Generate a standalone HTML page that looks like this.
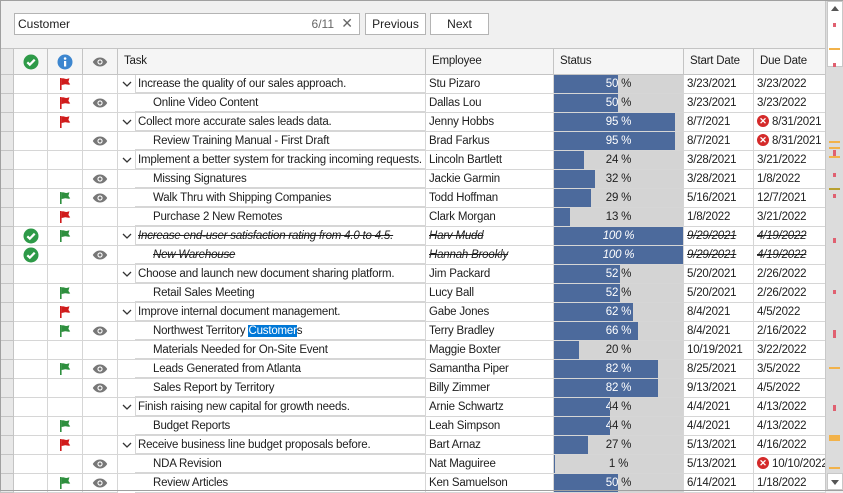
<!DOCTYPE html>
<html><head><meta charset="utf-8"><style>
*{box-sizing:border-box;margin:0;padding:0}
body{width:843px;height:491px;overflow:hidden;background:#f0f0f0;font-family:"Liberation Sans",sans-serif;font-size:12px;color:#202020;position:relative}
.frame{position:absolute;left:0;top:0;width:843px;height:491px;border:1px solid #a0a0a0;pointer-events:none;border-right:none}
.search{position:absolute;left:14px;top:13px;width:346px;height:22px;background:#fff;border:1px solid #b4b4b4;padding:3px 3px;}
.search .cnt{position:absolute;right:25px;top:3px;color:#666}
.search .x{position:absolute;right:6px;top:1px;color:#666;font-size:14px}
.btn{position:absolute;top:13px;height:22px;background:#fff;border:1px solid #b4b4b4;text-align:center;line-height:20px}
table{position:absolute;left:0;top:48px;border-collapse:collapse;table-layout:fixed;width:825px;background:#fff;font-size:11.5px;letter-spacing:-0.2px}
tr{height:19px}
td,th{height:18px;max-height:18px;border:1px solid #d6d6d6;white-space:nowrap;overflow:hidden;padding:0 0 0 3px;font-weight:normal;text-align:left;vertical-align:middle;line-height:17px}
th{height:25px;background:#f5f5f5;border-color:#c4c4c4;padding-left:6px}
tr:first-child{height:26px}
tr>*:first-child{background:#e8e8e8;border-color:#c4c4c4;padding:0}
td svg,th svg{display:inline-block;vertical-align:middle}
td.ic,th.ic{text-align:center;padding:0;line-height:0}
th.ic{line-height:0}
td.t{position:relative;border-bottom:none;padding:0}
td.t:after{content:"";position:absolute;left:17px;right:0;bottom:0;height:1px;background:#d6d6d6}
.p{margin-left:17px;border-left:1px solid #d6d6d6;padding-left:2px;height:18px;line-height:18px;overflow:hidden}
.c{padding-left:35px;height:18px;line-height:18px;overflow:hidden}
td.t svg.chev{position:absolute;left:4px;top:6px}
td.s{padding:0;position:relative}
.bg{position:absolute;left:0;top:0;right:0;bottom:0;background:#d4d4d4}
.bar{position:absolute;left:0;top:0;bottom:0;background:#4c6a9c;overflow:hidden}
.lt{position:absolute;left:0;top:0;width:129px;text-align:center;line-height:18px}
.bar .lt{color:#fff}
.st{text-decoration:line-through;font-style:italic}
.err{display:inline-block;width:12px;height:12px;border-radius:6px;background:#d42a2a;color:#fff;font-size:9px;line-height:12px;text-align:center;font-weight:bold;vertical-align:middle;margin-right:3px;letter-spacing:0}
.hl{background:#0078d7;color:#fff}
.sb{position:absolute;left:825px;top:0;width:18px;height:491px;background:#dcdcdc;border-left:1px solid #c8c8c8}
.sb div{position:absolute}
</style></head><body>
<svg width="0" height="0" style="position:absolute"><defs>
<symbol id="fl" viewBox="0 0 14 14"><path d="M2 1h1.6v12H2z"/><path d="M3.6 1.5c2-1 3.5 1 6 0.3l1.8-0.5-1 3.6 1.8 2.5c-2.5 1-4-1-6.6 0.2L3.6 8z"/></symbol>
<symbol id="ey" viewBox="0 0 16 10"><path d="M8 0.5C4.5 0.5 1.8 3 0.8 5c1 2 3.7 4.5 7.2 4.5S14.2 7 15.2 5C14.2 3 11.5 0.5 8 0.5z" fill="#777"/><circle cx="8" cy="5" r="2.6" fill="#fff"/><circle cx="8" cy="5" r="1.5" fill="#777"/></symbol>
<symbol id="ck" viewBox="0 0 16 16"><circle cx="8" cy="8" r="7.5" fill="#2e9a48"/><path d="M4.3 8.3l2.5 2.4 4.9-5" stroke="#fff" stroke-width="2.2" fill="none"/></symbol>
<symbol id="ch" viewBox="0 0 10 6"><path d="M1 1l4 4 4-4" stroke="#333" stroke-width="1.3" fill="none"/></symbol>
</defs></svg>
<div class="search">Customer<span class="cnt">6/11</span><span class="x">✕</span></div>
<div class="btn" style="left:365px;width:61px">Previous</div>
<div class="btn" style="left:430px;width:59px">Next</div>
<table>
<colgroup><col style="width:13px"><col style="width:34px"><col style="width:35px"><col style="width:35px"><col style="width:308px"><col style="width:128px"><col style="width:130px"><col style="width:70px"><col style="width:72px"></colgroup>
<tr><th></th><th class="ic"><svg width="16" height="16"><use href="#ck"/></svg></th><th class="ic"><svg width="16" height="16"><circle cx="8" cy="8" r="7.5" fill="#3d86cf"/><rect x="7" y="7" width="2.2" height="5.5" fill="#fff"/><circle cx="8.1" cy="4.5" r="1.3" fill="#fff"/></svg></th><th class="ic"><svg width="16" height="10"><use href="#ey"/></svg></th><th>Task</th><th>Employee</th><th>Status</th><th>Start Date</th><th>Due Date</th></tr>
<tr><td></td><td></td><td class="ic"><svg width="14" height="14" fill="#d01c1c"><use href="#fl"/></svg></td><td></td><td class="t"><svg class="chev" width="10" height="6"><use href="#ch"/></svg><div class="p">Increase the quality of our sales approach.</div></td><td>Stu Pizaro</td><td class="s"><div class="bg"><div class="lt">50 %</div></div><div class="bar" style="width:64px"><div class="lt">50 %</div></div></td><td>3/23/2021</td><td>3/23/2022</td></tr>
<tr><td></td><td></td><td class="ic"><svg width="14" height="14" fill="#d01c1c"><use href="#fl"/></svg></td><td class="ic"><svg width="16" height="10"><use href="#ey"/></svg></td><td class="t"><div class="c">Online Video Content</div></td><td>Dallas Lou</td><td class="s"><div class="bg"><div class="lt">50 %</div></div><div class="bar" style="width:64px"><div class="lt">50 %</div></div></td><td>3/23/2021</td><td>3/23/2022</td></tr>
<tr><td></td><td></td><td class="ic"><svg width="14" height="14" fill="#d01c1c"><use href="#fl"/></svg></td><td></td><td class="t"><svg class="chev" width="10" height="6"><use href="#ch"/></svg><div class="p">Collect more accurate sales leads data.</div></td><td>Jenny Hobbs</td><td class="s"><div class="bg"><div class="lt">95 %</div></div><div class="bar" style="width:121px"><div class="lt">95 %</div></div></td><td>8/7/2021</td><td><span class="err">✕</span>8/31/2021</td></tr>
<tr><td></td><td></td><td></td><td class="ic"><svg width="16" height="10"><use href="#ey"/></svg></td><td class="t"><div class="c">Review Training Manual - First Draft</div></td><td>Brad Farkus</td><td class="s"><div class="bg"><div class="lt">95 %</div></div><div class="bar" style="width:121px"><div class="lt">95 %</div></div></td><td>8/7/2021</td><td><span class="err">✕</span>8/31/2021</td></tr>
<tr><td></td><td></td><td></td><td></td><td class="t"><svg class="chev" width="10" height="6"><use href="#ch"/></svg><div class="p">Implement a better system for tracking incoming requests.</div></td><td>Lincoln Bartlett</td><td class="s"><div class="bg"><div class="lt">24 %</div></div><div class="bar" style="width:30px"><div class="lt">24 %</div></div></td><td>3/28/2021</td><td>3/21/2022</td></tr>
<tr><td></td><td></td><td></td><td class="ic"><svg width="16" height="10"><use href="#ey"/></svg></td><td class="t"><div class="c">Missing Signatures</div></td><td>Jackie Garmin</td><td class="s"><div class="bg"><div class="lt">32 %</div></div><div class="bar" style="width:41px"><div class="lt">32 %</div></div></td><td>3/28/2021</td><td>1/8/2022</td></tr>
<tr><td></td><td></td><td class="ic"><svg width="14" height="14" fill="#2e8f3e"><use href="#fl"/></svg></td><td class="ic"><svg width="16" height="10"><use href="#ey"/></svg></td><td class="t"><div class="c">Walk Thru with Shipping Companies</div></td><td>Todd Hoffman</td><td class="s"><div class="bg"><div class="lt">29 %</div></div><div class="bar" style="width:37px"><div class="lt">29 %</div></div></td><td>5/16/2021</td><td>12/7/2021</td></tr>
<tr><td></td><td></td><td class="ic"><svg width="14" height="14" fill="#d01c1c"><use href="#fl"/></svg></td><td></td><td class="t"><div class="c">Purchase 2 New Remotes</div></td><td>Clark Morgan</td><td class="s"><div class="bg"><div class="lt">13 %</div></div><div class="bar" style="width:16px"><div class="lt">13 %</div></div></td><td>1/8/2022</td><td>3/21/2022</td></tr>
<tr><td></td><td class="ic"><svg width="16" height="16"><use href="#ck"/></svg></td><td class="ic"><svg width="14" height="14" fill="#2e8f3e"><use href="#fl"/></svg></td><td></td><td class="t"><svg class="chev" width="10" height="6"><use href="#ch"/></svg><div class="p st">Increase end-user satisfaction rating from 4.0 to 4.5.</div></td><td class="st">Harv Mudd</td><td class="s"><div class="bar st" style="width:129px"><div class="lt">100 %</div></div></td><td class="st">9/29/2021</td><td class="st">4/19/2022</td></tr>
<tr><td></td><td class="ic"><svg width="16" height="16"><use href="#ck"/></svg></td><td></td><td class="ic"><svg width="16" height="10"><use href="#ey"/></svg></td><td class="t"><div class="c st">New Warehouse</div></td><td class="st">Hannah Brookly</td><td class="s"><div class="bar st" style="width:129px"><div class="lt">100 %</div></div></td><td class="st">9/29/2021</td><td class="st">4/19/2022</td></tr>
<tr><td></td><td></td><td></td><td></td><td class="t"><svg class="chev" width="10" height="6"><use href="#ch"/></svg><div class="p">Choose and launch new document sharing platform.</div></td><td>Jim Packard</td><td class="s"><div class="bg"><div class="lt">52 %</div></div><div class="bar" style="width:66px"><div class="lt">52 %</div></div></td><td>5/20/2021</td><td>2/26/2022</td></tr>
<tr><td></td><td></td><td class="ic"><svg width="14" height="14" fill="#2e8f3e"><use href="#fl"/></svg></td><td></td><td class="t"><div class="c">Retail Sales Meeting</div></td><td>Lucy Ball</td><td class="s"><div class="bg"><div class="lt">52 %</div></div><div class="bar" style="width:66px"><div class="lt">52 %</div></div></td><td>5/20/2021</td><td>2/26/2022</td></tr>
<tr><td></td><td></td><td class="ic"><svg width="14" height="14" fill="#d01c1c"><use href="#fl"/></svg></td><td></td><td class="t"><svg class="chev" width="10" height="6"><use href="#ch"/></svg><div class="p">Improve internal document management.</div></td><td>Gabe Jones</td><td class="s"><div class="bg"><div class="lt">62 %</div></div><div class="bar" style="width:79px"><div class="lt">62 %</div></div></td><td>8/4/2021</td><td>4/5/2022</td></tr>
<tr><td></td><td></td><td class="ic"><svg width="14" height="14" fill="#2e8f3e"><use href="#fl"/></svg></td><td class="ic"><svg width="16" height="10"><use href="#ey"/></svg></td><td class="t"><div class="c">Northwest Territory <span class="hl">Customer</span>s</div></td><td>Terry Bradley</td><td class="s"><div class="bg"><div class="lt">66 %</div></div><div class="bar" style="width:84px"><div class="lt">66 %</div></div></td><td>8/4/2021</td><td>2/16/2022</td></tr>
<tr><td></td><td></td><td></td><td></td><td class="t"><div class="c">Materials Needed for On-Site Event</div></td><td>Maggie Boxter</td><td class="s"><div class="bg"><div class="lt">20 %</div></div><div class="bar" style="width:25px"><div class="lt">20 %</div></div></td><td>10/19/2021</td><td>3/22/2022</td></tr>
<tr><td></td><td></td><td class="ic"><svg width="14" height="14" fill="#2e8f3e"><use href="#fl"/></svg></td><td class="ic"><svg width="16" height="10"><use href="#ey"/></svg></td><td class="t"><div class="c">Leads Generated from Atlanta</div></td><td>Samantha Piper</td><td class="s"><div class="bg"><div class="lt">82 %</div></div><div class="bar" style="width:104px"><div class="lt">82 %</div></div></td><td>8/25/2021</td><td>3/5/2022</td></tr>
<tr><td></td><td></td><td></td><td class="ic"><svg width="16" height="10"><use href="#ey"/></svg></td><td class="t"><div class="c">Sales Report by Territory</div></td><td>Billy Zimmer</td><td class="s"><div class="bg"><div class="lt">82 %</div></div><div class="bar" style="width:104px"><div class="lt">82 %</div></div></td><td>9/13/2021</td><td>4/5/2022</td></tr>
<tr><td></td><td></td><td></td><td></td><td class="t"><svg class="chev" width="10" height="6"><use href="#ch"/></svg><div class="p">Finish raising new capital for growth needs.</div></td><td>Arnie Schwartz</td><td class="s"><div class="bg"><div class="lt">44 %</div></div><div class="bar" style="width:56px"><div class="lt">44 %</div></div></td><td>4/4/2021</td><td>4/13/2022</td></tr>
<tr><td></td><td></td><td class="ic"><svg width="14" height="14" fill="#2e8f3e"><use href="#fl"/></svg></td><td></td><td class="t"><div class="c">Budget Reports</div></td><td>Leah Simpson</td><td class="s"><div class="bg"><div class="lt">44 %</div></div><div class="bar" style="width:56px"><div class="lt">44 %</div></div></td><td>4/4/2021</td><td>4/13/2022</td></tr>
<tr><td></td><td></td><td class="ic"><svg width="14" height="14" fill="#d01c1c"><use href="#fl"/></svg></td><td></td><td class="t"><svg class="chev" width="10" height="6"><use href="#ch"/></svg><div class="p">Receive business line budget proposals before.</div></td><td>Bart Arnaz</td><td class="s"><div class="bg"><div class="lt">27 %</div></div><div class="bar" style="width:34px"><div class="lt">27 %</div></div></td><td>5/13/2021</td><td>4/16/2022</td></tr>
<tr><td></td><td></td><td></td><td class="ic"><svg width="16" height="10"><use href="#ey"/></svg></td><td class="t"><div class="c">NDA Revision</div></td><td>Nat Maguiree</td><td class="s"><div class="bg"><div class="lt">1 %</div></div><div class="bar" style="width:1px"><div class="lt">1 %</div></div></td><td>5/13/2021</td><td><span class="err">✕</span>10/10/2022</td></tr>
<tr><td></td><td></td><td class="ic"><svg width="14" height="14" fill="#2e8f3e"><use href="#fl"/></svg></td><td class="ic"><svg width="16" height="10"><use href="#ey"/></svg></td><td class="t"><div class="c">Review Articles</div></td><td>Ken Samuelson</td><td class="s"><div class="bg"><div class="lt">50 %</div></div><div class="bar" style="width:64px"><div class="lt">50 %</div></div></td><td>6/14/2021</td><td>1/18/2022</td></tr>
</table>
<div class="sb">
<div style="left:1px;top:1px;width:16px;height:66px;background:#fff;border:1px solid #c8c8c8"></div>
<div style="left:5px;top:6px;width:0;height:0;border-left:4px solid transparent;border-right:4px solid transparent;border-bottom:5px solid #555"></div>
<div style="left:1px;top:473px;width:16px;height:17px;background:#fff;border:1px solid #c8c8c8"></div>
<div style="left:5px;top:480px;width:0;height:0;border-left:4px solid transparent;border-right:4px solid transparent;border-top:5px solid #555"></div>
<div style="left:7px;top:23px;width:3px;height:4px;background:#e06070"></div>
<div style="left:3px;top:48px;width:11px;height:2px;background:#f2b24a"></div>
<div style="left:7px;top:63px;width:3px;height:4px;background:#e06070"></div>
<div style="left:3px;top:141px;width:11px;height:2px;background:#f2b24a"></div>
<div style="left:3px;top:147px;width:11px;height:2px;background:#f2b24a"></div>
<div style="left:3px;top:156px;width:11px;height:2px;background:#f2b24a"></div>
<div style="left:7px;top:150px;width:3px;height:6px;background:#e06070"></div>
<div style="left:7px;top:173px;width:3px;height:4px;background:#e06070"></div>
<div style="left:3px;top:188px;width:11px;height:2px;background:#b8a030"></div>
<div style="left:7px;top:194px;width:3px;height:4px;background:#e06070"></div>
<div style="left:7px;top:238px;width:3px;height:5px;background:#e06070"></div>
<div style="left:7px;top:290px;width:3px;height:4px;background:#e06070"></div>
<div style="left:7px;top:330px;width:3px;height:8px;background:#e06070"></div>
<div style="left:3px;top:367px;width:11px;height:2px;background:#f2b24a"></div>
<div style="left:7px;top:405px;width:3px;height:6px;background:#e06070"></div>
<div style="left:3px;top:435px;width:11px;height:6px;background:#f2b24a"></div>
<div style="left:3px;top:467px;width:11px;height:2px;background:#f2b24a"></div>
</div>
<div class="frame"></div>
</body></html>
